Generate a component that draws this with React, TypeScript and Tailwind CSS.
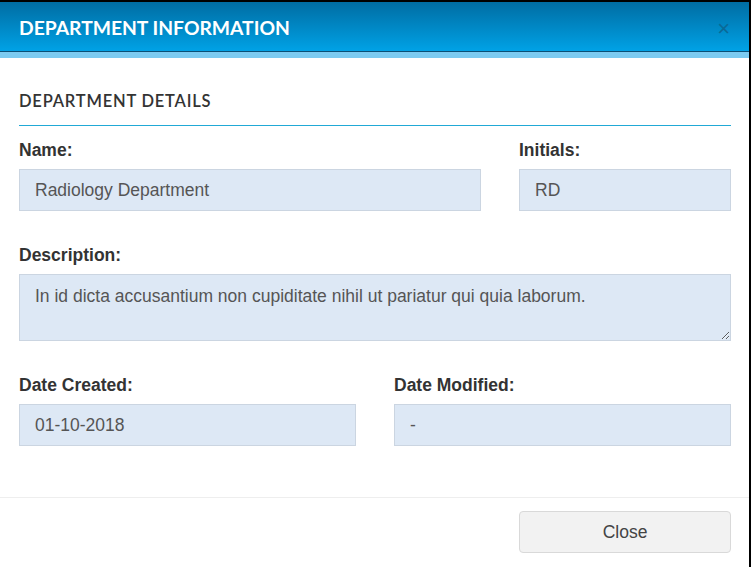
export default function App() {
  const label = "block h-[20px] text-[17.5px] leading-[20px] font-bold text-[#333]";
  const input =
    "h-[42px] w-full border border-[#cbd5e1] bg-[#dde8f5] px-[15px] text-[17.5px] leading-[40px] text-[#555]";

  return (
    <div className="h-[567px] w-[751px] bg-black pt-[2px] pr-[2px] font-['Liberation_Sans',Arial,sans-serif]">
      <div className="flex h-full flex-col bg-white">
        <div className="flex h-[50px] items-center justify-between border-b border-[#0b4f75] bg-gradient-to-b from-[#006da3] to-[#00a2e6] pt-[4px] pl-[19px] pr-[19px]">
          <h2 className="font-['Lato',sans-serif] text-[19.3px] font-bold text-white">
            DEPARTMENT INFORMATION
          </h2>
          <span className="text-[22px] leading-none text-[#0a6996]">×</span>
        </div>
        <div className="h-[6px] bg-[#7ccbf1]" />

        <div className="flex-1 pl-[19px] pr-[18px]">
          <div className="border-b border-[#21a9d6] pt-[31px] pb-[12px] font-['Lato',sans-serif] text-[16.5px] leading-[24px] font-semibold tracking-[0.8px] text-[#333]">
            DEPARTMENT DETAILS
          </div>

          <div className="mt-[14px] grid grid-cols-[462px_212px] justify-between">
            <div>
              <label className={label}>Name:</label>
              <div className={`mt-[9px] ${input}`}>Radiology Department</div>
            </div>
            <div>
              <label className={label}>Initials:</label>
              <div className={`mt-[9px] ${input}`}>RD</div>
            </div>
          </div>

          <div className="mt-[34px]">
            <label className={label}>Description:</label>
            <textarea
              readOnly
              value="In id dicta accusantium non cupiditate nihil ut pariatur qui quia laborum."
              className="mt-[9px] block h-[67px] w-full border border-[#cbd5e1] bg-[#dde8f5] px-[15px] pt-[11px] text-[17.5px] leading-[20px] text-[#555] outline-none"
            />
          </div>

          <div className="mt-[34px] grid grid-cols-[337px_337px] justify-between">
            <div>
              <label className={label}>Date Created:</label>
              <div className={`mt-[9px] ${input}`}>01-10-2018</div>
            </div>
            <div>
              <label className={label}>Date Modified:</label>
              <div className={`mt-[9px] ${input}`}>-</div>
            </div>
          </div>
        </div>

        <div className="flex h-[70px] items-start justify-end border-t border-[#eeeeee] pl-[19px] pr-[18px] pt-[13px]">
          <button className="h-[42px] w-[212px] rounded-[4px] border border-[#d9d9d9] bg-[#f2f2f2] text-[17.5px] text-[#444]">
            Close
          </button>
        </div>
      </div>
    </div>
  );
}
